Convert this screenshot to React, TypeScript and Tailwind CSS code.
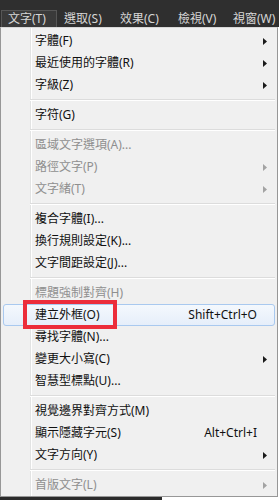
import React from 'react';

type Entry =
  | { label: string; shortcut?: string; sub?: boolean; disabled?: boolean; active?: boolean }
  | 'sep';

const items: Entry[] = [
  { label: '字體(F)', sub: true },
  { label: '最近使用的字體(R)', sub: true },
  { label: '字級(Z)', sub: true },
  'sep',
  { label: '字符(G)' },
  'sep',
  { label: '區域文字選項(A)...', disabled: true },
  { label: '路徑文字(P)', sub: true, disabled: true },
  { label: '文字緒(T)', sub: true, disabled: true },
  'sep',
  { label: '複合字體(I)...' },
  { label: '換行規則設定(K)...' },
  { label: '文字間距設定(J)...' },
  'sep',
  { label: '標題強制對齊(H)', disabled: true },
  { label: '建立外框(O)', shortcut: 'Shift+Ctrl+O', active: true },
  { label: '尋找字體(N)...' },
  { label: '變更大小寫(C)', sub: true },
  { label: '智慧型標點(U)...' },
  'sep',
  { label: '視覺邊界對齊方式(M)' },
  { label: '顯示隱藏字元(S)', shortcut: 'Alt+Ctrl+I' },
  { label: '文字方向(Y)', sub: true },
  'sep',
  { label: '首版文字(L)', sub: true, disabled: true },
];

const menus = [
  { label: '文字(T)', w: 'w-[56px]', active: true },
  { label: '選取(S)', w: 'w-[56px]' },
  { label: '效果(C)', w: 'w-[58px]' },
  { label: '檢視(V)', w: 'w-[55px]' },
  { label: '視窗(W)', w: 'w-[56px]' },
];

function Arrow({ disabled }: { disabled?: boolean }) {
  return (
    <svg width="4" height="7" viewBox="0 0 4 7" className="block">
      <polygon points="0,0 4,3.5 0,7" fill={disabled ? '#a3a3a3' : '#1a1a1a'} />
    </svg>
  );
}

export default function App() {
  return (
    <div className="w-[279px] h-[500px] bg-white overflow-hidden font-['Noto_Sans','Noto_Sans_CJK_TC',sans-serif] text-[12px]">
      {/* menu bar */}
      <div className="h-[27px] bg-[#2f2f2f] flex items-end pl-[1px]">
        {menus.map((m) => (
          <div
            key={m.label}
            className={`${m.w} h-[17px] flex items-center pl-[6px] shrink-0 whitespace-nowrap leading-none text-[#d6d6d6] ${
              m.active ? 'bg-[#3a3a3a] border border-b-0 border-[#565656]' : 'border border-transparent'
            }`}
          >
            {m.label}
          </div>
        ))}
      </div>

      {/* dropdown */}
      <div className="w-[278px] border border-[#979797] border-t-[#d8d8d8] pt-[2px] bg-[#f0f0f0] bg-[linear-gradient(to_right,#f0f0f0_29px,#e2e3e3_29px,#e2e3e3_30px,#ffffff_30px,#ffffff_31px,#f0f0f0_31px)]">
        {items.map((it, i) =>
          it === 'sep' ? (
            <div key={i} className="h-[8px] flex items-center ml-[29px] mr-[2px]">
              <div className="w-full h-[2px] border-t border-[#dcdcdc] border-b border-b-white" />
            </div>
          ) : (
            <div
              key={i}
              className={`relative mx-[2px] h-[22px] flex items-center pl-[31px] pr-[7px] rounded-[3px] border whitespace-nowrap leading-none ${
                it.active
                  ? 'border-[#a9c9ef] bg-[linear-gradient(#f4f8fd,#e6eefa)]'
                  : 'border-transparent'
              } ${it.disabled ? 'text-[#8f8f8f]' : 'text-[#111111]'}`}
            >
              <span className="flex-1">{it.label}</span>
              {it.shortcut && <span className="mr-[6px]">{it.shortcut}</span>}
              <span className="w-[4px] flex items-center">{it.sub && <Arrow disabled={it.disabled} />}</span>
              {it.active && (
                <div className="absolute left-[19px] top-[-5px] w-[94px] h-[29px] border-[4px] border-[#ec2d3b]" />
              )}
            </div>
          )
        )}
      </div>
      <div className="h-[3px] flex">
        <div className="w-[162px] bg-[#2b2b2b]" />
      </div>
    </div>
  );
}
